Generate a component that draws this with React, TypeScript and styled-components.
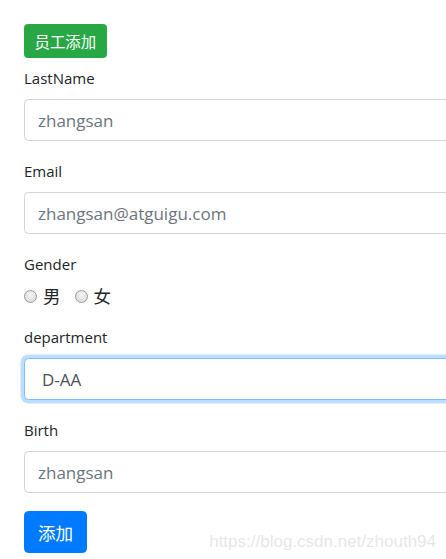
import React from 'react';
import styled, { createGlobalStyle, css } from 'styled-components';

const GlobalStyle = createGlobalStyle`
  html, body {
    margin: 0;
    padding: 0;
    background: #fff;
    overflow: hidden;
  }
  body {
    font-family: "Open Sans", "Noto Sans CJK SC", sans-serif;
    color: #212529;
  }
  * {
    box-sizing: border-box;
  }
`;

const Page = styled.div`
  position: relative;
  width: 446px;
  height: 559px;
  overflow: hidden;
  padding: 24px 0 0 24px;
`;

const Form = styled.form`
  width: 640px;
  display: flex;
  flex-direction: column;
`;

const Btn = styled.button<{ $variant: 'success' | 'primary'; $small?: boolean }>`
  align-self: flex-start;
  border: 1px solid transparent;
  color: #fff;
  font-family: "Open Sans", "Noto Sans CJK SC", sans-serif;
  cursor: pointer;

  ${(p) =>
    p.$small
      ? css`
          height: 34px;
          padding: 0 9.5px;
          font-size: 15.4px;
          border-radius: 3.5px;
        `
      : css`
          height: 42px;
          padding: 0 13px;
          font-size: 17.6px;
          border-radius: 4.4px;
        `}

  ${(p) =>
    p.$variant === 'success'
      ? css`
          background: #28a745;
          border-color: #28a745;
        `
      : css`
          background: #007bff;
          border-color: #007bff;
        `}
`;

const Group = styled.div<{ $first?: boolean }>`
  display: flex;
  flex-direction: column;
  margin-top: ${(p) => (p.$first ? '8px' : '0')};
  margin-bottom: 18px;
`;

const Label = styled.label`
  font-size: 15px;
  line-height: 24px;
  margin-bottom: 9px;
  color: #212529;
`;

const fieldBase = css`
  width: 100%;
  height: 42px;
  padding: 0 13px;
  font-family: "Open Sans", "Noto Sans CJK SC", sans-serif;
  font-size: 17px;
  color: #495057;
  background: #fff;
  border: 1px solid #ced4da;
  border-radius: 4.4px;
  outline: none;

  &::placeholder {
    color: #6c757d;
    opacity: 1;
  }
`;

const Input = styled.input`
  ${fieldBase}
`;

const Select = styled.select<{ $focused?: boolean }>`
  ${fieldBase}
  appearance: none;
  padding-left: 17px;

  ${(p) =>
    p.$focused &&
    css`
      border-color: #80bdff;
      box-shadow: 0 0 0 3.5px rgba(0, 123, 255, 0.25);
    `}
`;

const RadioRow = styled.div`
  display: flex;
  align-items: center;
  height: 22px;
`;

const RadioItem = styled.label`
  display: inline-flex;
  align-items: center;
  margin-right: 14px;
  font-size: 17.5px;
  line-height: 22px;
`;

const Radio = styled.input.attrs({ type: 'radio' })`
  width: 13px;
  height: 13px;
  margin: 0 6px 0 0;
  appearance: none;
  border-radius: 50%;
  border: 1px solid #9a9a9a;
  background: radial-gradient(circle at 50% 35%, #f4f4f4, #d6d6d6);
`;

const Watermark = styled.div`
  position: absolute;
  right: 10px;
  bottom: 7px;
  font-family: "Liberation Sans", Arial, sans-serif;
  font-size: 17px;
  color: rgba(200, 200, 200, 0.45);
  pointer-events: none;
  white-space: nowrap;
`;

export default function App() {
  return (
    <>
      <GlobalStyle />
      <Page>
        <Btn type="button" $variant="success" $small>
          员工添加
        </Btn>
        <Form onSubmit={(e) => e.preventDefault()}>
          <Group $first>
            <Label>LastName</Label>
            <Input placeholder="zhangsan" />
          </Group>
          <Group>
            <Label>Email</Label>
            <Input placeholder="zhangsan@atguigu.com" />
          </Group>
          <Group>
            <Label>Gender</Label>
            <RadioRow>
              <RadioItem>
                <Radio name="gender" />男
              </RadioItem>
              <RadioItem>
                <Radio name="gender" />女
              </RadioItem>
            </RadioRow>
          </Group>
          <Group>
            <Label>department</Label>
            <Select $focused defaultValue="D-AA">
              <option>D-AA</option>
              <option>D-BB</option>
            </Select>
          </Group>
          <Group>
            <Label>Birth</Label>
            <Input placeholder="zhangsan" />
          </Group>
          <Btn type="submit" $variant="primary">
            添加
          </Btn>
        </Form>
        <Watermark>https://blog.csdn.net/zhouth94</Watermark>
      </Page>
    </>
  );
}
